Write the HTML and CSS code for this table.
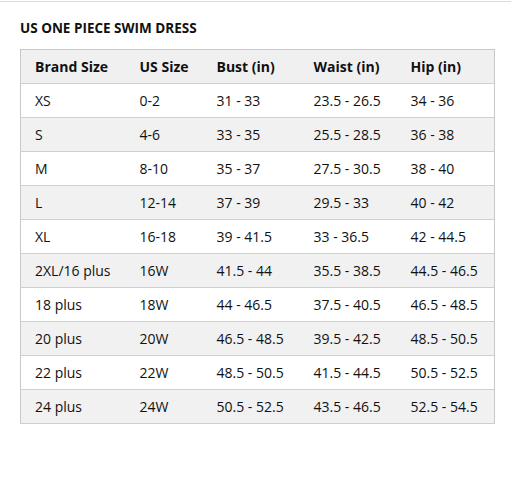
FILE: index.html
```html
<!DOCTYPE html>
<html>
<head>
<meta charset="utf-8">
<link rel="stylesheet" href="styles.css">
</head>
<body>
<div class="page">
  <h1 class="title">US ONE PIECE SWIM DRESS</h1>
  <table class="sizes">
    <thead>
      <tr><th>Brand Size</th><th>US Size</th><th>Bust (in)</th><th>Waist (in)</th><th>Hip (in)</th></tr>
    </thead>
    <tbody>
      <tr><td>XS</td><td>0-2</td><td>31 - 33</td><td>23.5 - 26.5</td><td>34 - 36</td></tr>
      <tr><td>S</td><td>4-6</td><td>33 - 35</td><td>25.5 - 28.5</td><td>36 - 38</td></tr>
      <tr><td>M</td><td>8-10</td><td>35 - 37</td><td>27.5 - 30.5</td><td>38 - 40</td></tr>
      <tr><td>L</td><td>12-14</td><td>37 - 39</td><td>29.5 - 33</td><td>40 - 42</td></tr>
      <tr><td>XL</td><td>16-18</td><td>39 - 41.5</td><td>33 - 36.5</td><td>42 - 44.5</td></tr>
      <tr><td>2XL/16 plus</td><td>16W</td><td>41.5 - 44</td><td>35.5 - 38.5</td><td>44.5 - 46.5</td></tr>
      <tr><td>18 plus</td><td>18W</td><td>44 - 46.5</td><td>37.5 - 40.5</td><td>46.5 - 48.5</td></tr>
      <tr><td>20 plus</td><td>20W</td><td>46.5 - 48.5</td><td>39.5 - 42.5</td><td>48.5 - 50.5</td></tr>
      <tr><td>22 plus</td><td>22W</td><td>48.5 - 50.5</td><td>41.5 - 44.5</td><td>50.5 - 52.5</td></tr>
      <tr><td>24 plus</td><td>24W</td><td>50.5 - 52.5</td><td>43.5 - 46.5</td><td>52.5 - 54.5</td></tr>
    </tbody>
  </table>
</div>
</body>
</html>
```
FILE: styles.css
```css
html, body {
  margin: 0;
  padding: 0;
  background: #fff;
}
body {
  font-family: "Open Sans", "Noto Sans", sans-serif;
  color: #111;
}
.page {
  width: 511px;
  height: 477px;
  border-top: 1px solid #dcdcdc;
  margin-top: 1px;
  box-sizing: border-box;
  padding: 18px 0 0 20px;
}
.title {
  margin: 0;
  font-size: 13.5px;
  font-weight: 700;
  line-height: 16px;
  height: 29px;
  letter-spacing: 0;
}
.sizes {
  border-collapse: collapse;
  width: 475px;
  border: 1px solid #c8c8c8;
  font-size: 14px;
  table-layout: fixed;
}
.sizes th, .sizes td {
  height: 34px;
  padding: 0 0 0 14px;
  text-align: left;
  border-bottom: 1px solid #cfcfcf;
  vertical-align: middle;
  box-sizing: border-box;
}
.sizes th {
  font-weight: 700;
  background: #f0f0f0;
}
.sizes th:nth-child(1) { width: 105px; }
.sizes th:nth-child(2) { width: 77px; }
.sizes th:nth-child(3) { width: 97px; }
.sizes th:nth-child(4) { width: 97px; }
.sizes tbody tr:nth-child(even) td {
  background: #f1f1f1;
}
.sizes tbody tr:nth-child(odd) td {
  background: #fff;
}
```
